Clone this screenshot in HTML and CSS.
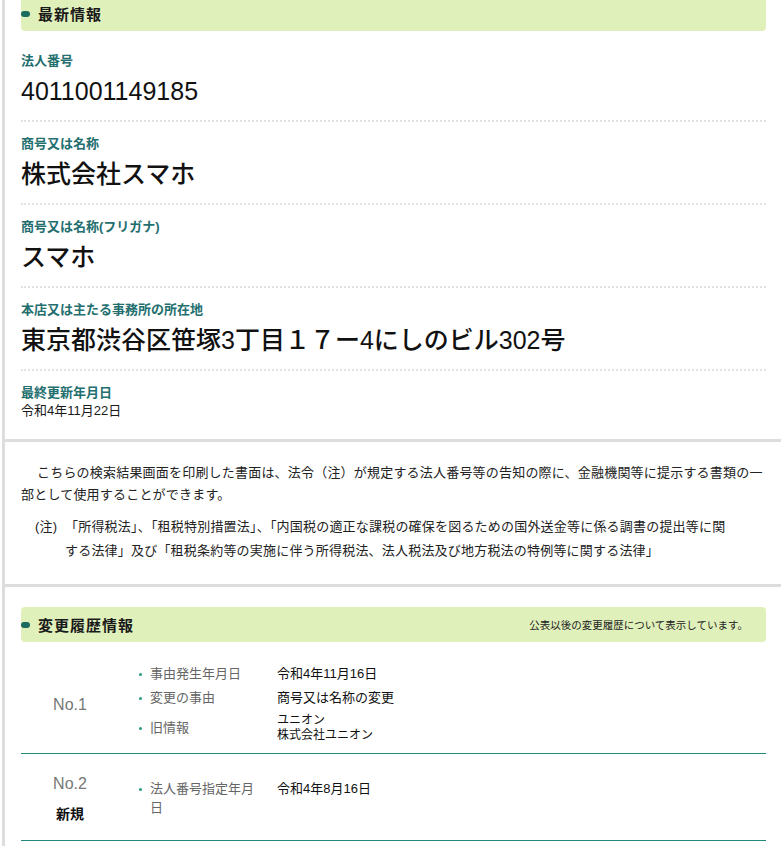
FILE: index.html
```html
<!DOCTYPE html>
<html lang="ja">

<head>
    <meta charset="UTF-8">
    <meta name="viewport" content="width=device-width, initial-scale=1.0">
    <title>法人番号 検索結果</title>
    <link rel="stylesheet" href="styles.css">
</head>

<body>
    <div class="page">
        <!-- 最新情報 -->
        <section class="block">
            <h2 class="bar bar-top"><span class="bar-title">最新情報</span></h2>
            <dl class="fields">
                <div class="field">
                    <dt>法人番号</dt>
                    <dd class="big">4011001149185</dd>
                </div>
                <div class="field">
                    <dt>商号又は名称</dt>
                    <dd class="big">株式会社スマホ</dd>
                </div>
                <div class="field">
                    <dt>商号又は名称(フリガナ)</dt>
                    <dd class="big">スマホ</dd>
                </div>
                <div class="field">
                    <dt>本店又は主たる事務所の所在地</dt>
                    <dd class="big">東京都渋谷区笹塚3丁目１７ー4にしのビル302号</dd>
                </div>
                <div class="field field-last">
                    <dt>最終更新年月日</dt>
                    <dd class="small">令和4年11月22日</dd>
                </div>
            </dl>
        </section>

        <!-- 注意書き -->
        <section class="notice">
            <p class="notice-text">こちらの検索結果画面を印刷した書面は、法令（注）が規定する法人番号等の告知の際に、金融機関等に提示する書類の一部として使用することができます。</p>
            <div class="note">
                <span class="note-mark">(注)</span>
                <p class="note-text">「所得税法」、「租税特別措置法」、「内国税の適正な課税の確保を図るための国外送金等に係る調書の提出等に関する法律」及び「租税条約等の実施に伴う所得税法、法人税法及び地方税法の特例等に関する法律」</p>
            </div>
        </section>

        <!-- 変更履歴情報 -->
        <section class="block block-history">
            <h2 class="bar">
                <span class="bar-title">変更履歴情報</span>
                <span class="bar-note">公表以後の変更履歴について表示しています。</span>
            </h2>
            <div class="history">
                <div class="history-row">
                    <div class="history-no">
                        <span class="no">No.1</span>
                    </div>
                    <dl class="items">
                        <dt>事由発生年月日</dt>
                        <dd>令和4年11月16日</dd>
                        <dt>変更の事由</dt>
                        <dd>商号又は名称の変更</dd>
                        <dt>旧情報</dt>
                        <dd class="old">ユニオン<br>株式会社ユニオン</dd>
                    </dl>
                </div>
                <div class="history-row">
                    <div class="history-no">
                        <span class="no">No.2</span>
                        <span class="tag">新規</span>
                    </div>
                    <dl class="items">
                        <dt>法人番号指定年月日</dt>
                        <dd>令和4年8月16日</dd>
                    </dl>
                </div>
            </div>
        </section>
    </div>
</body>

</html>
```

FILE: styles.css
```css
* {
    margin: 0;
    padding: 0;
    box-sizing: border-box;
}

body {
    font-family: "Liberation Sans", "Noto Sans CJK JP", sans-serif;
    color: #1a1a1a;
    background: #fff;
}

.page {
    margin-left: 2px;
    border-left: 3px solid #dddddd;
    min-height: 850px;
}

.block {
    padding: 0 15px 0 16px;
}

.block-history {
    padding-top: 20px;
}

/* 見出しバー */
.bar {
    display: flex;
    align-items: center;
    height: 35px;
    padding-right: 18px;
    background: #e0f0ba;
    border-radius: 4px;
    font-weight: normal;
}

.bar-top {
    margin-top: -4px;
}

.bar-title {
    display: flex;
    align-items: center;
    gap: 8px;
    font-size: 15px;
    font-weight: bold;
    letter-spacing: 1px;
}

.bar-title::before {
    content: "";
    width: 9px;
    height: 6px;
    border-radius: 3px;
    background: #1b6b5e;
}

.bar-note {
    margin-left: auto;
    font-size: 10.5px;
    color: #222;
}

/* 最新情報 */
.fields {
    margin-top: 8px;
}

.field {
    padding: 13px 0 14px;
    border-bottom: 2px dotted #e2e2e2;
}

.field dt {
    font-size: 13px;
    line-height: 18px;
    font-weight: bold;
    color: #236e6e;
}

.field .big {
    margin-top: 6px;
    font-size: 25px;
    line-height: 30px;
    font-weight: 500;
    color: #111;
}

.field-last {
    border-bottom: none;
    padding-bottom: 19px;
}

.field .small {
    font-size: 13px;
    line-height: 18px;
}

/* 注意書き */
.notice {
    border-top: 3px solid #dddddd;
    border-bottom: 3px solid #dddddd;
    padding: 20px 15px 21px 16px;
    font-size: 13px;
    letter-spacing: 0.2px;
    color: #222;
}

.notice-text {
    text-indent: 16px;
    line-height: 22px;
}

.note {
    display: flex;
    margin-top: 9px;
    padding-left: 14px;
    line-height: 24px;
}

.note-mark {
    flex: 0 0 30px;
}

.note-text {
    max-width: 672px;
}

/* 変更履歴情報 */
.history {
    margin-top: 11px;
}

.history-row {
    display: grid;
    grid-template-columns: 98px 1fr;
    align-items: center;
    padding: 8px 0;
    border-bottom: 1px solid #23897a;
}

.history-no {
    display: flex;
    flex-direction: column;
    align-items: center;
    gap: 10px;
    padding: 12px 0 8px;
}

.no {
    font-size: 16px;
    line-height: 20px;
    color: #777;
}

.tag {
    font-size: 14px;
    line-height: 20px;
    font-weight: bold;
    color: #111;
}

.items {
    display: grid;
    grid-template-columns: 146px 1fr;
    column-gap: 12px;
}

.items dt {
    align-self: center;
    padding: 3px 0 2px 31px;
    text-indent: -11px;
    font-size: 13px;
    line-height: 19px;
    color: #666;
}

.items dt::before {
    content: "";
    display: inline-block;
    width: 3px;
    height: 3px;
    margin-right: 8px;
    border-radius: 50%;
    background: #2a9a80;
    vertical-align: middle;
}

.items dd {
    align-self: start;
    padding: 3px 0 2px;
    font-size: 13px;
    line-height: 19px;
    color: #111;
}

.items .old {
    padding-top: 4px;
    font-size: 12px;
    line-height: 15px;
}
```
